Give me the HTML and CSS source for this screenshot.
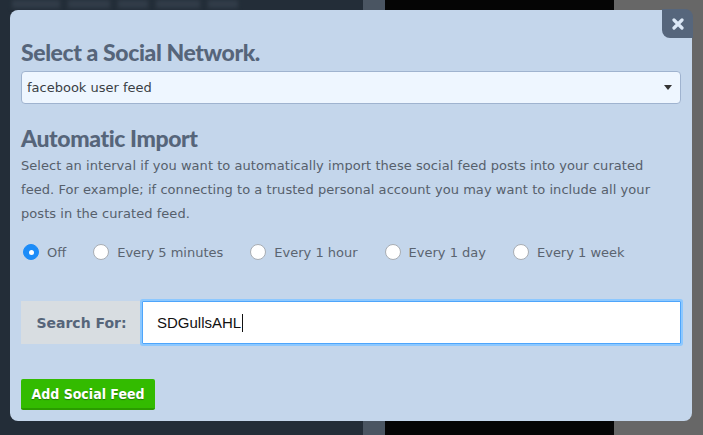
FILE: index.html
```html
<!DOCTYPE html>
<html lang="en">
<head>
<meta charset="utf-8">
<title>Select a Social Network</title>
<link rel="stylesheet" href="styles.css">
</head>
<body>
<div class="backdrop">
  <div class="bg-dark">
    <span class="bg-blur w1"></span><span class="bg-blur w2"></span><span class="bg-blur w3"></span><span class="bg-blur w4"></span><span class="bg-blur w5"></span>
  </div>
  <div class="bg-edge"></div>
  <div class="bg-photo"></div>
  <div class="bg-gray"></div>
</div>

<div class="modal">
  <button class="close" aria-label="Close">
    <svg width="12" height="12" viewBox="0 0 12 12"><path d="M2 2 L10 10 M10 2 L2 10" stroke="#dce8f6" stroke-width="3.2" stroke-linecap="round"/></svg>
  </button>

  <h1 class="title">Select a Social Network.</h1>
  <div class="select">
    <span class="select-value">facebook user feed</span>
    <span class="select-arrow"></span>
  </div>

  <h2 class="title title-2">Automatic Import</h2>
  <p class="desc">Select an interval if you want to automatically import these social feed posts into your curated feed. For example; if connecting to a trusted personal account you may want to include all your posts in the curated feed.</p>

  <div class="radios">
    <label class="radio"><span class="dot checked"></span>Off</label>
    <label class="radio"><span class="dot"></span>Every 5 minutes</label>
    <label class="radio"><span class="dot"></span>Every 1 hour</label>
    <label class="radio"><span class="dot"></span>Every 1 day</label>
    <label class="radio"><span class="dot"></span>Every 1 week</label>
  </div>

  <div class="search">
    <div class="search-label">Search For:</div>
    <div class="search-input">SDGullsAHL<span class="caret"></span></div>
  </div>

  <button class="add-btn">Add Social Feed</button>
</div>
</body>
</html>
```

FILE: styles.css
```css
* { box-sizing: border-box; }
html, body { margin: 0; padding: 0; }
body {
  width: 703px;
  height: 435px;
  overflow: hidden;
  position: relative;
  font-family: "DejaVu Sans", sans-serif;
}

.backdrop {
  display: flex;
  height: 435px;
}
.bg-dark {
  width: 363px;
  background: #232d38;
  overflow: hidden;
  display: flex;
  gap: 8px;
  padding-left: 12px;
  align-items: flex-start;
}
.bg-blur {
  display: block;
  height: 8px;
  background: #323d49;
  filter: blur(2px);
}
.w1 { width: 48px; }
.w2 { width: 42px; }
.w3 { width: 30px; }
.w4 { width: 44px; }
.w5 { width: 30px; }
.bg-edge { width: 22px; background: #4a5562; }
.bg-photo { width: 229px; background: #050505; }
.bg-gray { flex: 1; background: #676767; }

.modal {
  position: absolute;
  left: 10px;
  top: 10px;
  width: 682px;
  height: 411px;
  background: #c4d6eb;
  border-radius: 8px;
  padding: 30px 11px 11px 11px;
  display: flex;
  flex-direction: column;
  align-items: flex-start;
}

.close {
  position: absolute;
  top: -1px;
  right: -1px;
  width: 31px;
  height: 29px;
  border: 0;
  padding: 0;
  background: #56667c;
  border-radius: 0 8px 0 8px;
  display: flex;
  align-items: center;
  justify-content: center;
}

.title {
  margin: 0;
  font-family: Lato, sans-serif;
  font-weight: 900;
  font-size: 23px;
  line-height: 24px;
  letter-spacing: -0.4px;
  color: #56657a;
}
.title-2 { margin-top: 22px; }

.select {
  margin-top: 7px;
  width: 660px;
  height: 33px;
  background: #eef6ff;
  border: 1px solid #9fb3cf;
  border-radius: 4px;
  display: flex;
  align-items: center;
  justify-content: space-between;
  padding: 0 8px 0 5px;
  font-size: 13px;
  color: #3a3f45;
}
.select-arrow {
  width: 0;
  height: 0;
  border-left: 4px solid transparent;
  border-right: 4px solid transparent;
  border-top: 5px solid #333;
}

.desc {
  margin: 4px 0 0;
  width: 642px;
  font-size: 13px;
  letter-spacing: 0.05px;
  line-height: 24px;
  color: #56606c;
}

.radios {
  margin-top: 14px;
  display: flex;
  gap: 27px;
  height: 24px;
  align-items: center;
  padding-left: 2px;
}
.radio {
  display: flex;
  align-items: center;
  gap: 8px;
  font-size: 13px;
  color: #5a6470;
}
.dot {
  width: 16px;
  height: 16px;
  border-radius: 50%;
  background: #fff;
  border: 1px solid #a8adb3;
  display: flex;
  align-items: center;
  justify-content: center;
}
.dot.checked {
  background: #1c8cf8;
  border-color: #1c8cf8;
}
.dot.checked::after {
  content: "";
  width: 5px;
  height: 5px;
  border-radius: 50%;
  background: #fff;
}

.search {
  margin-top: 37px;
  display: flex;
  width: 660px;
  height: 43px;
}
.search-label {
  width: 121px;
  background: #d8dde1;
  display: flex;
  align-items: center;
  justify-content: center;
  font-weight: bold;
  font-size: 14px;
  color: #56657a;
}
.search-input {
  flex: 1;
  background: #fff;
  border: 1px solid #4ea5fb;
  box-shadow: 0 0 0 2px #8cc8ff;
  border-radius: 1px;
  display: flex;
  align-items: center;
  padding-left: 14px;
  font-family: "Liberation Sans", Arial, sans-serif;
  font-size: 15px;
  color: #111;
}
.caret {
  width: 1px;
  height: 18px;
  background: #111;
  margin-left: 1px;
}

.add-btn {
  margin-top: 35px;
  width: 134px;
  height: 31px;
  border: 0;
  border-bottom: 2px solid #2a9c00;
  border-radius: 2px;
  background: #33bb00;
  color: #fff;
  font-family: "DejaVu Sans Condensed", "DejaVu Sans", sans-serif;
  font-weight: bold;
  font-size: 14px;
  text-shadow: 0 1px 1px rgba(0,0,0,0.35);
  padding: 0;
}
```
